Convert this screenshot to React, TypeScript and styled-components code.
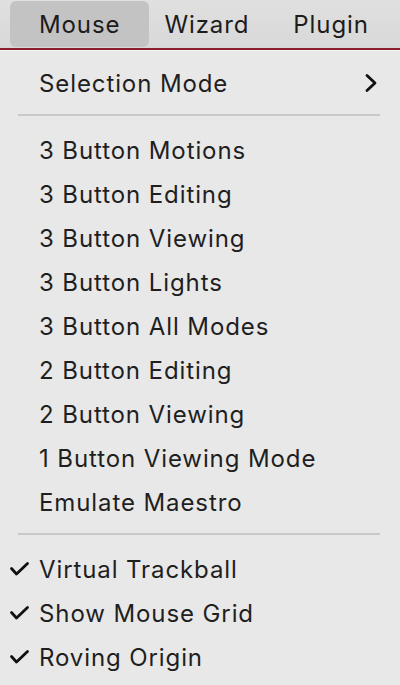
import React from "react";
import styled, { createGlobalStyle } from "styled-components";

const Global = createGlobalStyle`
  html, body { margin: 0; padding: 0; background: #e8e8e8; }
  body { font-family: Inter, "Liberation Sans", sans-serif; -webkit-font-smoothing: antialiased; }
`;

const Page = styled.div`
  width: 400px;
  height: 685px;
  background: #e8e8e8;
  display: flex;
  flex-direction: column;
  overflow: hidden;
`;

const MenuBar = styled.div`
  height: 46px;
  background: linear-gradient(#e0e0e0, #d8d8d8);
  display: flex;
  align-items: stretch;
  padding: 1px 0 1px 17px;
  border-bottom: 2px solid #8a1f2c;
  box-shadow: 0 1px 0 #f4f4f4;
`;

const BarItem = styled.div<{ $active?: boolean }>`
  display: flex;
  align-items: center;
  padding: 0 ${(p) => (p.$active ? 29 : 22)}px;
  margin: 0 ${(p) => (p.$active ? -7 : 0)}px;
  font-size: 24px;
  letter-spacing: 0.9px;
  color: #1c1c1c;
  border-radius: 6px;
  background: ${(p) => (p.$active ? "#c3c3c3" : "transparent")};
`;

const Menu = styled.div`
  display: flex;
  flex-direction: column;
  padding-top: 11px;
`;

const Item = styled.div`
  height: 44px;
  display: flex;
  align-items: center;
  position: relative;
  padding-left: 39px;
  padding-right: 22px;
  font-size: 24px;
  letter-spacing: 0.9px;
  color: #1f1f1f;
`;

const Label = styled.span`
  flex: 1;
`;

const Check = styled.svg`
  position: absolute;
  left: 9px;
  top: 50%;
  transform: translateY(-50%);
`;

const Separator = styled.div`
  height: 2px;
  background: #c9c9c9;
  margin: 9px 20px 12px 18px;
`;

const Chevron = () => (
  <svg width="14" height="20" viewBox="0 0 14 20">
    <path d="M3 2.5 L11 10 L3 17.5" fill="none" stroke="#111" strokeWidth="2.8" strokeLinecap="round" strokeLinejoin="round" />
  </svg>
);

const CheckMark = () => (
  <Check width="21" height="15" viewBox="0 0 21 15">
    <path d="M2.5 7 L7.5 12.5 L18.5 2" fill="none" stroke="#111" strokeWidth="2.8" strokeLinecap="round" strokeLinejoin="round" />
  </Check>
);

const modes = [
  "3 Button Motions",
  "3 Button Editing",
  "3 Button Viewing",
  "3 Button Lights",
  "3 Button All Modes",
  "2 Button Editing",
  "2 Button Viewing",
  "1 Button Viewing Mode",
  "Emulate Maestro",
];

const toggles = ["Virtual Trackball", "Show Mouse Grid", "Roving Origin"];

export default function App() {
  return (
    <Page>
      <Global />
      <MenuBar>
        <BarItem $active>Mouse</BarItem>
        <BarItem>Wizard</BarItem>
        <BarItem>Plugin</BarItem>
      </MenuBar>
      <Menu>
        <Item>
          <Label>Selection Mode</Label>
          <Chevron />
        </Item>
        <Separator />
        {modes.map((m) => (
          <Item key={m}>
            <Label>{m}</Label>
          </Item>
        ))}
        <Separator />
        {toggles.map((t) => (
          <Item key={t}>
            <CheckMark />
            <Label>{t}</Label>
          </Item>
        ))}
      </Menu>
    </Page>
  );
}
